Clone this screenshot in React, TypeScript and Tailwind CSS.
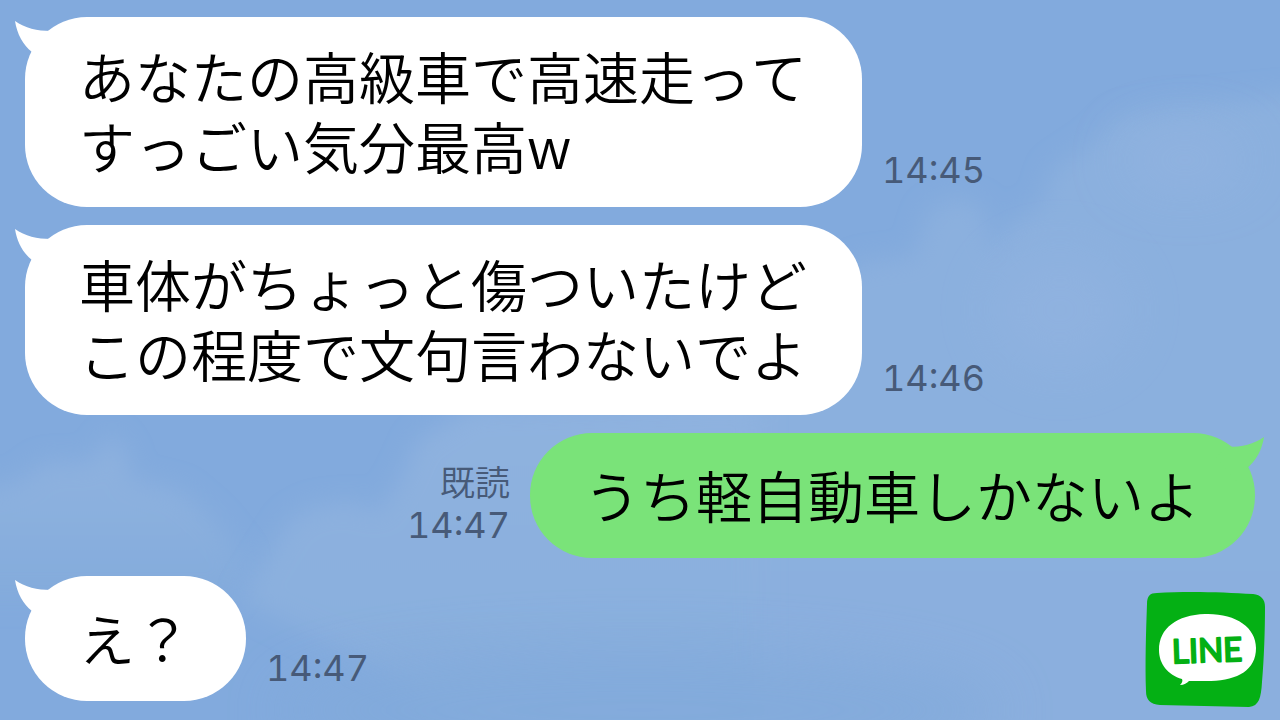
type Message = {
  text: string;
  time: string;
  mine?: boolean;
};

const messages: Message[] = [
  { text: "あなたの高級車で高速走って\nすっごい気分最高w", time: "14:45" },
  { text: "車体がちょっと傷ついたけど\nこの程度で文句言わないでよ", time: "14:46" },
  { text: "うち軽自動車しかないよ", time: "14:47", mine: true },
  { text: "え？", time: "14:47" },
];

function Sky() {
  return (
    <svg
      aria-hidden="true"
      className="absolute inset-0 -z-10 h-full w-full"
      viewBox="0 0 1280 720"
      preserveAspectRatio="xMidYMid slice"
    >
      <defs>
        <filter id="soft" filterUnits="userSpaceOnUse" x="-100" y="-100" width="1480" height="920">
          <feGaussianBlur stdDeviation="12" />
        </filter>
        <filter id="wide" filterUnits="userSpaceOnUse" x="-200" y="-200" width="1680" height="1120">
          <feGaussianBlur stdDeviation="28" />
        </filter>
        <linearGradient id="fade" x1="0" y1="0" x2="0" y2="1">
          <stop offset="0" stopColor="#8bb0de" />
          <stop offset="1" stopColor="#8bafde" />
        </linearGradient>
        <linearGradient id="fadeOut" x1="0" y1="0" x2="0" y2="1">
          <stop offset="0" stopColor="#8fb2df" />
          <stop offset="0.45" stopColor="#8bb0de" />
          <stop offset="1" stopColor="#83abdc" />
        </linearGradient>
      </defs>
      <rect width="1280" height="720" fill="#82aadd" />
      <path
        filter="url(#soft)"
        fill="url(#fade)"
        d="M640 440 L860 262 L914 256 L928 212 L955 196 L982 206 L994 254 L1010 222 L1042 204 L1052 170 L1094 142 L1120 116 L1180 106 L1380 86 V820 H600 Z"
      />
      <path
        filter="url(#soft)"
        fill="url(#fadeOut)"
        d="M-80 500 L18 482 L45 462 L92 462 L112 434 L128 456 L130 478 L180 490 L215 520 L246 560 L230 600 L-80 600 Z"
      />
      <path
        filter="url(#soft)"
        fill="url(#fadeOut)"
        d="M240 600 L290 520 L315 506 L355 502 L378 512 L400 480 L418 440 L470 408 L760 400 V820 H560 L400 680 Z"
      />
      <ellipse filter="url(#wide)" cx="1185" cy="160" rx="60" ry="26" fill="#96b5e2" opacity="0.6" />
      <ellipse filter="url(#wide)" cx="1060" cy="310" rx="70" ry="60" fill="#96b5e2" opacity="0.4" />
      <ellipse filter="url(#wide)" cx="640" cy="710" rx="360" ry="60" fill="#82aadb" opacity="0.8" />
    </svg>
  );
}

function Tail({ mine }: { mine?: boolean }) {
  return (
    <svg
      aria-hidden="true"
      viewBox="0 0 50 46"
      className={
        mine
          ? "absolute -right-[9px] top-[4px] h-[46px] w-[50px] -scale-x-100 fill-[#7ae379]"
          : "absolute -left-[10px] top-[4px] h-[46px] w-[50px] fill-white"
      }
    >
      <path d="M0 0 C10 7 22 10 36 10 L48 20 L28 44 L17 31 C8 24 2 13 0 0 Z" />
    </svg>
  );
}

function Row({ text, time, mine }: Message) {
  const single = !text.includes("\n");
  return (
    <li className={mine ? "flex flex-row-reverse items-end gap-5" : "flex items-end gap-5"}>
      <div
        className={
          "relative flex min-h-[125px] flex-col justify-center rounded-[62px] pb-[27px] pl-[54px] pr-[55px] pt-[23px] text-[56px] leading-[70px] text-black " +
          (mine ? "bg-[#7ae379]" : "bg-white")
        }
      >
        <Tail mine={mine} />
        <p className="relative whitespace-pre font-[350] [font-kerning:none]">{text}</p>
      </div>
      <div
        className={
          "flex flex-col gap-[2px] text-[#475a78] " +
          (mine ? "items-end " : "items-start ") +
          (single ? "pb-3" : "pb-4")
        }
      >
        {mine && <span className="text-[35px] font-[350] leading-[42px]">既読</span>}
        <time className="font-['Inter','Noto_Sans',sans-serif] text-[36px] leading-[42px] tabular-nums">{time}</time>
      </div>
    </li>
  );
}

function LineBadge() {
  return (
    <svg
      role="img"
      aria-label="LINE"
      viewBox="0 0 120 118"
      className="absolute bottom-[12px] right-[15px] h-[118px] w-[120px]"
    >
      <path
        fill="#04b014"
        d="M12 3 C40 1 78 2 108 4 C116 5 120 9 120 17 C120 40 119 68 117 92 C116 108 114 116 104 117 C74 116 44 116 15 115 C5 114 1 110 1 101 C0 74 1 42 2 14 C2 6 5 3 12 3 Z"
      />
      <path
        fill="#ffffff"
        d="M60 24 C90 23 111 37 111 58 C111 80 93 90 66 91 C57 91 50 91 44 91 C42 93 39 95 35 95 C37 93 38 91 37 89 C23 85 14 74 14 60 C14 38 32 25 60 24 Z"
      />
      <text
        x="62"
        y="72"
        textAnchor="middle"
        fontSize="33"
        fontWeight="400"
        fill="#04b014"
        stroke="#04b014"
        strokeWidth="2"
        strokeLinejoin="round"
        transform="rotate(-2 62 60)"
        className="font-['Lato',sans-serif]"
      >
        LINE
      </text>
    </svg>
  );
}

export default function App() {
  return (
    <main
      lang="ja"
      className="relative isolate min-h-screen overflow-hidden px-[25px] pb-[19px] pt-[17px] font-['Noto_Sans_CJK_JP',sans-serif]"
    >
      <Sky />
      <ul className="flex flex-col gap-[18px]">
        {messages.map((message, index) => (
          <Row key={index} {...message} />
        ))}
      </ul>
      <LineBadge />
    </main>
  );
}
